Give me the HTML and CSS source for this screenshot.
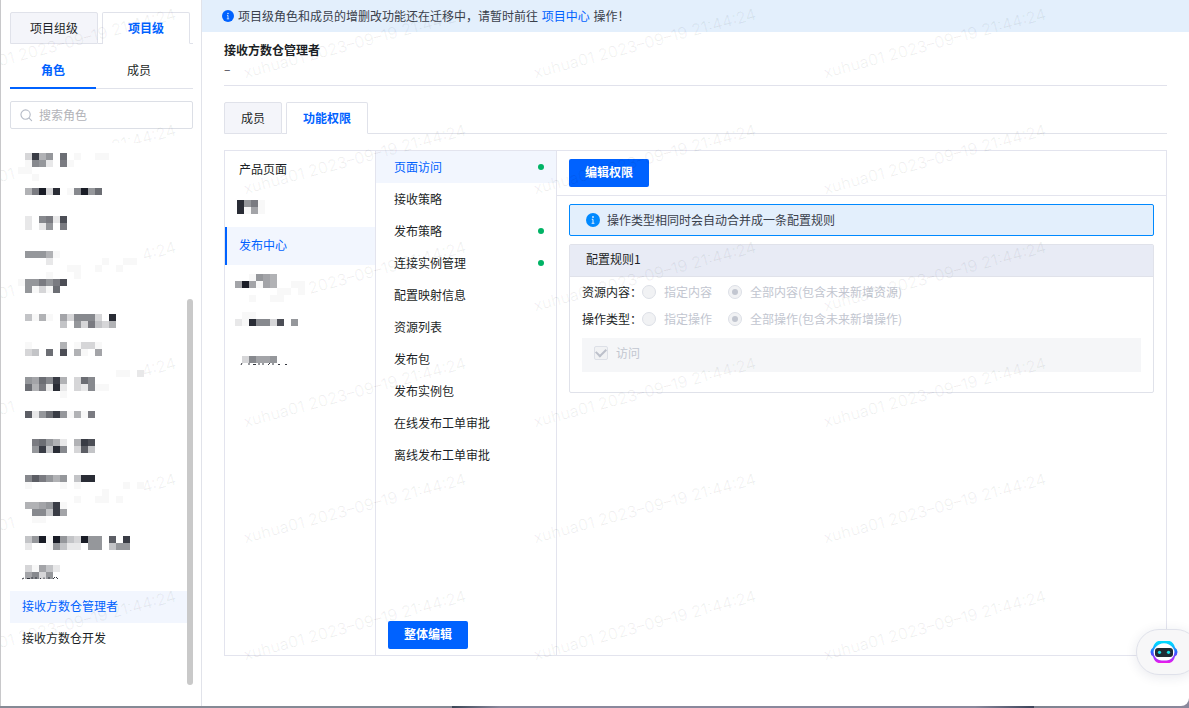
FILE: index.html
```html
<!DOCTYPE html>
<html lang="zh-CN">
<head>
<meta charset="utf-8">
<title>项目级</title>
<link rel="stylesheet" href="styles.css">
</head>
<body>
<div class="window">
  <aside class="sidebar">
    <div class="tabs tabs-level">
      <button class="tab" type="button">项目组级</button>
      <button class="tab tab-active" type="button">项目级</button>
    </div>
    <div class="subtabs">
      <button class="subtab subtab-active" type="button">角色</button>
      <button class="subtab" type="button">成员</button>
    </div>
    <label class="search">
      <svg class="search-icon" viewBox="0 0 14 14" aria-hidden="true"><circle cx="6" cy="6" r="5" fill="none" stroke="#b4bac6" stroke-width="1.2"/><path d="M9.8 9.8l2.7 2.7" stroke="#b4bac6" stroke-width="1.2" stroke-linecap="round"/></svg>
      <input class="search-input" type="text" placeholder="搜索角色">
    </label>
    <div class="roles">
      <ul class="role-masked" data-mosaics="roles"></ul>
      <ul class="role-list">
        <li><button class="role role-active" type="button">接收方数仓管理者</button></li>
        <li><button class="role" type="button">接收方数仓开发</button></li>
      </ul>
      <span class="scroll-thumb"></span>
    </div>
  </aside>

  <main class="main">
    <div class="banner">
      <svg class="banner-icon" viewBox="0 0 14 14" aria-hidden="true"><circle cx="7" cy="7" r="7" fill="#0062ff"/><circle cx="7" cy="4" r=".9" fill="#e3effc"/><path d="M5.8 6.3H7v3.8M5.6 10.3h2.8" stroke="#e3effc" stroke-width="1" fill="none"/></svg>
      <p class="banner-text">项目级角色和成员的增删改功能还在迁移中，请暂时前往 <a class="link" href="#">项目中心</a> 操作！</p>
    </div>
    <div class="content">
      <header class="heading">
        <h1 class="title">接收方数仓管理者</h1>
        <p class="description">–</p>
      </header>
      <div class="tabs tabs-detail">
        <button class="tab" type="button">成员</button>
        <button class="tab tab-active" type="button">功能权限</button>
      </div>
      <section class="panel">
        <nav class="products">
          <button class="product" type="button">产品页面</button>
          <div class="product-masked product-inset" data-mosaics="productsTop"></div>
          <button class="product product-active" type="button">发布中心</button>
          <div class="product-masked product-covered" data-mosaics="productsBottom"></div>
        </nav>
        <nav class="pages">
          <ul class="page-list">
            <li><button class="page page-active page-dot" type="button">页面访问</button></li>
            <li><button class="page" type="button">接收策略</button></li>
            <li><button class="page page-dot" type="button">发布策略</button></li>
            <li><button class="page page-dot" type="button">连接实例管理</button></li>
            <li><button class="page" type="button">配置映射信息</button></li>
            <li><button class="page" type="button">资源列表</button></li>
            <li><button class="page" type="button">发布包</button></li>
            <li><button class="page" type="button">发布实例包</button></li>
            <li><button class="page" type="button">在线发布工单审批</button></li>
            <li><button class="page" type="button">离线发布工单审批</button></li>
          </ul>
          <button class="primary" type="button">整体编辑</button>
        </nav>
        <div class="rules">
          <div class="rules-bar"><button class="primary" type="button">编辑权限</button></div>
          <div class="rules-body">
            <div class="alert">
              <svg class="alert-icon" viewBox="0 0 14 14" aria-hidden="true"><circle cx="7" cy="7" r="7" fill="#0089ff"/><circle cx="7" cy="4" r=".9" fill="#e3effc"/><path d="M5.8 6.3H7v3.8M5.6 10.3h2.8" stroke="#e3effc" stroke-width="1" fill="none"/></svg>
              <span>操作类型相同时会自动合并成一条配置规则</span>
            </div>
            <div class="card">
              <h2 class="card-title">配置规则1</h2>
              <div class="card-body">
                <div class="field" role="radiogroup" aria-labelledby="resource">
                  <span class="field-label" id="resource">资源内容：</span>
                  <label class="choice"><input class="radio" type="radio" name="resource" disabled>指定内容</label>
                  <label class="choice"><input class="radio" type="radio" name="resource" checked disabled>全部内容(包含未来新增资源)</label>
                </div>
                <div class="field" role="radiogroup" aria-labelledby="operation">
                  <span class="field-label" id="operation">操作类型：</span>
                  <label class="choice"><input class="radio" type="radio" name="operation" disabled>指定操作</label>
                  <label class="choice"><input class="radio" type="radio" name="operation" checked disabled>全部操作(包含未来新增操作)</label>
                </div>
                <div class="operations">
                  <label class="choice"><input class="checkbox" type="checkbox" checked disabled>访问</label>
                </div>
              </div>
            </div>
          </div>
        </div>
      </section>
    </div>
  </main>

  <svg class="watermark" aria-hidden="true"></svg>

  <button class="assistant" type="button">
    <svg class="robot" viewBox="0 0 28 24" aria-hidden="true">
      <defs><linearGradient id="ring" x1="0" y1="0" x2="0" y2="1"><stop offset="0" stop-color="#00dcff"/><stop offset=".2" stop-color="#08c8ff"/><stop offset=".5" stop-color="#2a62ff"/><stop offset=".78" stop-color="#9a35ff"/><stop offset="1" stop-color="#f318e8"/></linearGradient></defs>
      <path d="M8.5 1h11q4 1 5.5 6.500q2.500 1.500 2.500 4.500t-2.500 4.500Q23.500 22 19.500 23h-11Q4.500 22 3 16.500Q.5 15 .5 12T3 7.500Q4.500 2 8.500 1z" fill="url(#ring)"/>
      <path d="M9 4.500Q14 2 19 4.500Q24 7 24.500 12Q24 18 19 20q-5 1-10 0Q4 18 3.500 12Q4 7 9 4.500z" fill="#fff"/>
      <rect x="5" y="8" width="18" height="9" rx="3" fill="#202a32"/>
      <circle cx="9.500" cy="12.300" r="1.600" fill="#16dfe8"/><circle cx="18.500" cy="12.300" r="1.600" fill="#16dfe8"/>
    </svg>
  </button>
</div>
<script src="app.js"></script>
</body>
</html>
```

FILE: styles.css
```css
* { box-sizing: border-box; }
body {
  margin: 0;
  height: 100vh;
  padding-bottom: 2px;
  overflow: hidden;
  background: linear-gradient(90deg, #858a95 0, #858a95 38%, #3a4656 38%, #8a889c 42%, #8a889c 82%, #3a4258 87%, #7f8390 87%, #8a889c 100%);
  font: 12px/18px "Noto Sans CJK SC", sans-serif;
  color: #1c1f26;
}
button, input { font: inherit; color: inherit; }
button { margin: 0; padding: 0 0 2px; border: 0; background: none; text-align: left; cursor: pointer; }
ul, p, h1, h2 { margin: 0; padding: 0; list-style: none; font-size: 12px; }

.window {
  position: relative;
  display: flex;
  height: 100%;
  overflow: hidden;
  background: #fff;
  border-left: 1px solid #c8c8ca;
  border-bottom-right-radius: 8px;
}

.sidebar {
  display: flex;
  flex-direction: column;
  flex: none;
  width: 201px;
  padding: 12px 8px 21px 9px;
  border-right: 1px solid #e1e3ea;
}

.tabs { display: flex; height: 32px; flex: none; }
.tab {
  padding: 0 16px 1px;
  border: 1px solid #e0e2ea;
  border-radius: 2px 2px 0 0;
  background: #f4f5fa;
}
.tab-active { background: #fff; border-bottom-color: transparent; color: #0062ff; font-weight: 700; }
.tabs::after { content: ""; flex: 1; border-bottom: 1px solid #e0e2ea; }
.tabs .tab-active { position: relative; margin-left: 4px; }
.tab-active::before {
  content: "";
  position: absolute;
  left: -5px;
  bottom: -1px;
  width: 5px;
  border-bottom: 1px solid #e0e2ea;
}
.tabs-level .tab { width: 88px; padding: 0 0 1px; text-align: center; }

.subtabs { display: flex; height: 36px; margin-top: 9px; flex: none; box-shadow: inset 0 -1px #e0e2ea; }
.subtab { width: 86px; padding: 0; border-bottom: 2px solid transparent; text-align: center; }
.subtab-active { color: #0062ff; font-weight: 700; border-bottom-color: #0062ff; }

.search {
  display: flex;
  align-items: center;
  gap: 6px;
  flex: none;
  height: 28px;
  margin-top: 12px;
  padding: 0 9px;
  border: 1px solid #dcdfe6;
  border-radius: 2px;
}
.search-icon { width: 13px; height: 13px; flex: none; }
.search-input { flex: 1; min-width: 0; padding: 0; border: 0; outline: 0; background: none; }
.search-input::placeholder { color: #b2b3b8; opacity: 1; }

.roles { position: relative; flex: 1; min-height: 0; margin-top: 14px; padding-right: 6px; }
.role-masked { position: relative; z-index: 2; width: 126px; margin-left: 8px; background: #fff; }
.role-masked li { height: 32px; }
.mosaic { display: block; overflow: visible; }
.role { display: block; width: 100%; height: 32px; padding: 0 12px 2px; }
.role-active { background: #f2f6fe; color: #0062ff; }
.scroll-thumb {
  position: absolute;
  top: 156px;
  right: 0;
  bottom: 0;
  width: 6px;
  border-radius: 3px;
  background: #c9c9c9;
}

.main { display: flex; flex-direction: column; flex: 1; min-width: 0; }
.banner {
  display: flex;
  align-items: center;
  gap: 4px;
  flex: none;
  height: 32px;
  padding: 0 20px;
  background: #e3effc;
  color: #3a404b;
}
.banner-icon { width: 12px; height: 12px; }
.banner-text { padding-bottom: 1px; }
.link { margin: 0 1px; color: #0062ff; text-decoration: none; }
.content { display: flex; flex-direction: column; flex: 1; min-height: 0; padding: 8px 22px 50px; }
.heading { flex: none; height: 46px; border-bottom: 1px solid #e1e2ec; }
.title { font-weight: 700; line-height: 20px; }
.description { color: #3a404b; }
.tabs-detail { margin-top: 16px; }

.panel { display: flex; flex: 1; min-height: 0; margin-top: 16px; border: 1px solid #e3e4ee; }
.products { flex: none; width: 151px; border-right: 1px solid #e3e4ee; }
.product { display: block; width: 100%; height: 38px; padding: 0 14px 2px; }
.product-active { padding: 0 12px 2px; border-left: 2px solid #0062ff; background: #f2f6fe; color: #0062ff; }
.product-masked { padding-left: 10px; }
.product-inset { padding-left: 12px; }
.product-covered { position: relative; z-index: 2; width: 80px; background: #fff; }
.pages {
  display: flex;
  flex-direction: column;
  justify-content: space-between;
  flex: none;
  width: 181px;
  padding-bottom: 6px;
  border-right: 1px solid #e3e4ee;
}
.pages .primary { margin-left: 12px; }
.page { display: flex; align-items: center; justify-content: space-between; width: 100%; height: 32px; padding: 0 12px 1px 18px; }
.page-active { background: #f2f6fe; color: #0062ff; }
.page-dot::after { content: ""; width: 6px; height: 6px; border-radius: 50%; background: #00b365; }
.primary {
  width: 80px;
  height: 28px;
  border-radius: 2px;
  background: #0062ff;
  color: #fff;
  font-weight: 700;
  text-align: center;
}

.rules { flex: 1; min-width: 0; }
.rules-bar { padding: 8px 12px; border-bottom: 1px solid #e3e4ee; }
.rules-body { display: flex; flex-direction: column; gap: 8px; padding: 8px 12px; }
.alert {
  display: flex;
  align-items: center;
  gap: 7px;
  height: 32px;
  padding: 0 16px;
  border: 1px solid #0089ff;
  border-radius: 2px;
  background: #e3effc;
  color: #3a404b;
}
.alert-icon { width: 14px; height: 14px; }
.card { border: 1px solid #e0e2ea; border-radius: 2px; }
.card-title { height: 32px; padding: 0 16px; border-bottom: 1px solid #e0e2ea; background: #e8ebf5; font-weight: 400; line-height: 28px; }
.card-body { padding: 2px 12px 20px; }
.field { display: flex; align-items: center; height: 27px; }
.field-label { width: 60px; padding-bottom: 2px; }
.choice { display: flex; align-items: flex-end; gap: 8px; height: 18px; line-height: 16px; color: #c2c6d0; }
.choice { align-items: center; padding-bottom: 1px; }
.field .choice { margin-right: 16px; }
.radio, .checkbox {
  appearance: none;
  display: grid;
  place-items: center;
  width: 14px;
  height: 14px;
  margin: 0;
  border: 1px solid #dde0e7;
  background: #f1f2f4;
}
.radio { border-radius: 50%; }
.radio:checked::after { content: ""; width: 6px; height: 6px; border-radius: 50%; background: #c2c6d0; }
.checkbox { border-radius: 2px; }
.checkbox:checked::after {
  content: "";
  width: 8px;
  height: 5px;
  margin-bottom: 2px;
  border: solid #bcc0ca;
  border-width: 0 0 2px 2px;
  transform: rotate(-45deg);
}
.operations { margin-top: 5px; height: 34px; padding: 6px 12px; background: #f5f6f8; }

.watermark { position: absolute; inset: 0; z-index: 1; width: 100%; height: 100%; pointer-events: none; }
.watermark-text { font: 400 16px Inter, sans-serif; text-anchor: end; fill: #000; fill-opacity: .06; }

.assistant {
  position: absolute;
  z-index: 3;
  right: -10px;
  bottom: 31px;
  width: 63px;
  height: 46px;
  padding: 0 0 0 13px;
  border: 1px solid #dfe1ea;
  border-radius: 23px;
  background: #f7f7f8;
  box-shadow: 0 2px 12px rgba(30, 40, 80, .1);
}
.robot { display: block; width: 28px; height: 24px; }
```

FILE: app.js
```javascript
const NS = "http://www.w3.org/2000/svg";
const CELL = 7;
const RAMP = [0, .03, .1, .18, .26, .34, .4, .46, .52, .58, .64, .71, .78, .86, .93, 1];

// Each entry: [top offset, rows of hex shades, optional path of short strokes]
const mosaics = {
  roles: { height: 32, items: [
    [10, ["03d570a010011", "018720910", "11", "001"]],
    [13, ["059f3e018f7a"]],
    [9, ["020892c", "0202709"]],
    [12, ["077751", "00002000000010011", "000000011001001"]],
    [1, ["000010001", "177979c", "07131a"]],
    [11, ["0415106388830e", "00000040739435"]],
    [7, ["010000501331", "0340a0c05106"]],
    [3, ["000000000000001102", "076a8d503a8", "0a592e2032811", "000000100000"]],
    [12, ["0b27ad71519"]],
    [8, ["009a75205dc", "007d4e803b4"]],
    [12, ["08b975704ee", "010000101000000101", "0000000000001", "000000001001101"]],
    [7, ["05567d1", "00884d6", "0011"]],
    [9, ["047f1f743f770b0d", "0200174220770477"]],
    [6, ["031642", "06837"], "M4 20l2-1M9 19.500h3M14 20v-2M18 20v-2M22 20l1-1M26 20v-1.500M31 20v-2M35 20l2-2M38 18l2 2"]
  ] },
  productsTop: { height: 38, items: [
    [11, ["e791", "e161"]]
  ] },
  productsBottom: { height: 38, items: [
    [9, ["001765", "6f61650011", "0000001101", "0010011"]],
    [9, ["011", "21e883c07"]],
    [15, ["038667"], "M6 24l1-2M14 24v-2M18 23.500h3M24 24v-2M28 24v-2M33 24l2-2M38 24v-2M43 23.500h2M50 23.500h2"]
  ] }
};

function el(name, attrs) {
  const node = document.createElementNS(NS, name);
  for (const key in attrs) node.setAttribute(key, attrs[key]);
  return node;
}

document.querySelectorAll("[data-mosaics]").forEach(host => {
  const { height, items } = mosaics[host.dataset.mosaics];
  items.forEach(([top, rows, strokes]) => {
    const svg = el("svg", { class: "mosaic", width: 60, height });
    rows.forEach((row, r) => [...row].forEach((shade, c) => {
      if (shade === "0") return;
      svg.append(el("rect", { x: c * CELL, y: top + r * CELL, width: CELL, height: CELL, fill: "#191c26", "fill-opacity": RAMP[parseInt(shade, 16)] }));
    }));
    if (strokes) svg.append(el("path", { d: strokes, stroke: "#33363e", fill: "none", "stroke-width": 1 }));
    if (host.tagName === "UL") {
      const li = document.createElement("li");
      li.append(svg);
      host.append(li);
    } else host.append(svg);
  });
});

const mark = document.querySelector(".watermark");
for (let row = 0; row < 6; row++) {
  for (let col = 0; col < 4; col++) {
    const x = 176 + col * 290;
    const y = 19 + Math.round(row * 116.3);
    const text = el("text", { class: "watermark-text", transform: `translate(${x} ${y}) rotate(-15)` });
    text.textContent = (col ? "xuhua01" : "01") + " 2023–09–19 21:44:24";
    mark.append(text);
  }
}
```
